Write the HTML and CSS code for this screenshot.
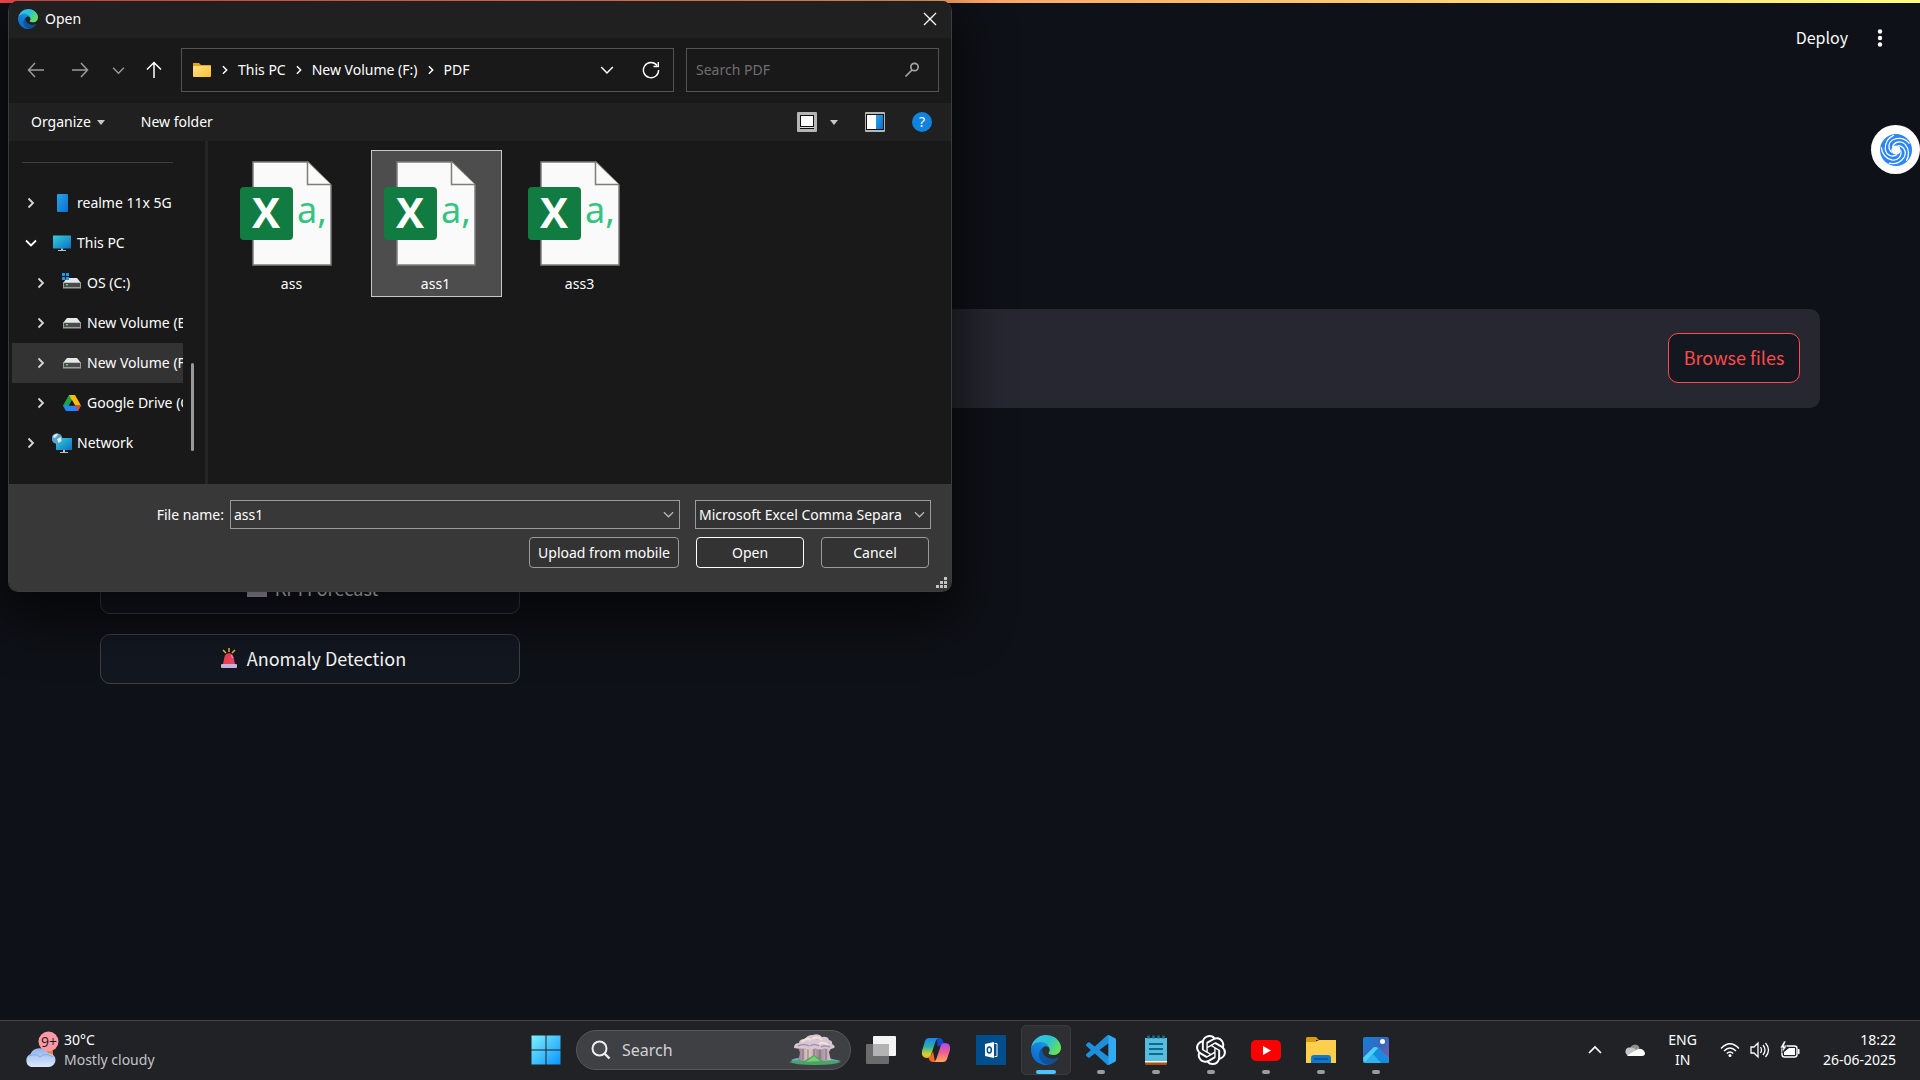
FILE: index.html
```html
<!DOCTYPE html>
<html lang="en">
<head>
<meta charset="utf-8">
<meta name="viewport" content="width=device-width, initial-scale=1">
<title>Open</title>
<link rel="stylesheet" href="styles.css">
</head>
<body>
<svg class="defs" aria-hidden="true">
  <defs>
    <linearGradient id="edgeNavy" x1="0" y1="0" x2="1" y2="0"><stop offset="0" stop-color="#0c59a4"/><stop offset="1" stop-color="#114a8b"/></linearGradient>
    <linearGradient id="edgeBlue" x1=".8" y1="0" x2=".3" y2="1"><stop offset="0" stop-color="#1b9de2"/><stop offset=".4" stop-color="#1481d8"/><stop offset="1" stop-color="#0a68c8"/></linearGradient>
    <linearGradient id="edgeGreen" x1="0" y1=".2" x2="1" y2=".7"><stop offset="0" stop-color="#35c1f1"/><stop offset=".5" stop-color="#2bc3d2"/><stop offset="1" stop-color="#6be54e"/></linearGradient>
    <linearGradient id="screen" x1="0" y1="0" x2="1" y2="1"><stop offset="0" stop-color="#33d0da"/><stop offset="1" stop-color="#0f6fc4"/></linearGradient>
    <linearGradient id="folder" x1="0" y1="0" x2="1" y2="1"><stop offset="0" stop-color="#ffe08a"/><stop offset="1" stop-color="#fcc22f"/></linearGradient>
    <linearGradient id="win" x1="0" y1="0" x2="1" y2="1"><stop offset="0" stop-color="#7df0ff"/><stop offset="1" stop-color="#0a94fb"/></linearGradient>
    <linearGradient id="cloud" x1="0" y1="0" x2="0" y2="1"><stop offset="0" stop-color="#8fb4ee"/><stop offset="1" stop-color="#dbe8fb"/></linearGradient>
    <linearGradient id="blueTile" x1="0" y1="0" x2="1" y2="1"><stop offset="0" stop-color="#29a4e8"/><stop offset="1" stop-color="#0a6fd0"/></linearGradient>
    <linearGradient id="copA" x1="0" y1="0" x2="0" y2="1"><stop offset="0" stop-color="#1686e8"/><stop offset=".45" stop-color="#2cb3a5"/><stop offset=".8" stop-color="#d5d02a"/><stop offset="1" stop-color="#f7b52a"/></linearGradient>
    <linearGradient id="copB" x1="0" y1="0" x2="0" y2="1"><stop offset="0" stop-color="#a44cf0"/><stop offset=".5" stop-color="#f25e90"/><stop offset="1" stop-color="#ffa95c"/></linearGradient>
    <linearGradient id="siren" x1="0" y1="0" x2="1" y2="0"><stop offset="0" stop-color="#f0413a"/><stop offset="1" stop-color="#e8467c"/></linearGradient>
    <linearGradient id="photo" x1="0" y1="0" x2="1" y2="1"><stop offset="0" stop-color="#1280d8"/><stop offset=".5" stop-color="#3668bd"/><stop offset="1" stop-color="#8a5aa8"/></linearGradient>
    <linearGradient id="trunk" x1="0" y1="0" x2="1" y2="0"><stop offset="0" stop-color="#8c7a90"/><stop offset=".3" stop-color="#e8cfc4"/><stop offset=".6" stop-color="#9c8896"/><stop offset="1" stop-color="#d8c4c8"/></linearGradient>
    <symbol id="edge" viewBox="0 0 256 256">
      <path fill="url(#edgeNavy)" d="M231 190.500a94 94 0 0 1-10.500 4.700 102 102 0 0 1-35.900 6.500c-47.300 0-88.500-32.500-88.500-74.300a31.500 31.500 0 0 1 16.400-27.300c-42.800 1.800-53.800 46.400-53.800 72.500 0 73.900 68.100 81.400 82.800 81.400 7.900 0 19.800-2.300 27-4.600l1.300-.4a128 128 0 0 0 66.600-52.800 4 4 0 0 0-5.400-5.700Z"/>
      <path fill="url(#edgeBlue)" d="M105.700 241.400a79 79 0 0 1-22.700-21.300 80.700 80.700 0 0 1 29.500-120c3.100-1.500 8.400-4.100 15.500-4a32.400 32.400 0 0 1 25.700 13 31.900 31.900 0 0 1 6.400 18.700c0-.2 24.400-79.600-80-79.600-43.900 0-80 41.600-80 78.200a130 130 0 0 0 12.100 56 128 128 0 0 0 156.300 67.100 75.500 75.500 0 0 1-62.800-8Z"/>
      <path fill="url(#edgeGreen)" d="M152.300 148.900c-.8 1-3.300 2.500-3.300 5.600 0 2.600 1.700 5.100 4.700 7.200 14.400 10 41.500 8.700 41.600 8.700a59.600 59.600 0 0 0 30.300-8.300A61.400 61.400 0 0 0 256 109.200c.3-22.400-8-37.300-11.300-43.900C223.500 23.800 177.700 0 128 0A128 128 0 0 0 0 126.200c.5-36.500 36.800-66 80-66 3.500 0 23.500.3 42 10 16.300 8.600 24.900 19 30.900 29.200 6.200 10.700 7.200 24.200 7.200 29.500 0 5.400-2.700 13.400-7.800 20Z"/>
    </symbol>
    <symbol id="chev" viewBox="0 0 12 12"><path d="M3.500 1.500 8 6l-4.500 4.500" fill="none" stroke="currentColor" stroke-width="1.800"/></symbol>
    <symbol id="down" viewBox="0 0 12 12"><path d="M1 3.500 6 8.500l5-5" fill="none" stroke="currentColor" stroke-width="1.300"/></symbol>
    <symbol id="drive" viewBox="0 0 20 20"><path d="M5 5h10l4 5H1z" fill="#e6e7e8"/><rect x="1" y="9.500" width="18" height="6" fill="#9a9c9e"/><rect x="2" y="10" width="16" height="4" fill="#484a4b"/><rect x="4" y="11" width="2" height="1.500" fill="#3fe055"/></symbol>
    <symbol id="pc" viewBox="0 0 20 20"><rect x="1" y="2.500" width="18" height="13" fill="url(#screen)"/><path d="M9 15.500h2v1.500h3v1H6v-1h3z" fill="#b8c4cc"/></symbol>
    <symbol id="csv" viewBox="0 0 106 106">
      <path d="M14 1h55l23 23v80H14z" fill="#fafafa" stroke="#7d7d7a" stroke-width="1.500"/>
      <path d="M68.500 1v22.500H92" fill="#fafafa" stroke="#7d7d7a" stroke-width="1.500"/>
      <rect x="1" y="26" width="53" height="53" rx="4" fill="#107c41"/>
      <text x="27" y="67" class="csv-x" text-anchor="middle">X</text>
      <text x="58" y="62" class="csv-a">a,</text>
    </symbol>
  </defs>
</svg>

<main class="app">
  <div class="strip"></div>
  <header class="app-header">
    <button class="deploy">Deploy</button>
    <button class="kebab" aria-label="Main menu"><svg width="20" height="20" viewBox="0 0 20 20" fill="#fafafa"><circle cx="10" cy="3.500" r="2.200"/><circle cx="10" cy="10" r="2.200"/><circle cx="10" cy="16.500" r="2.200"/></svg></button>
  </header>
  <div class="columns">
    <div class="menu">
      <button class="menu-btn"><svg width="20" height="20" viewBox="0 0 20 20"><rect x="0" y="1" width="20" height="18" fill="#cfc3dc"/><path d="M1 13l5-6 4 4 9-9" fill="none" stroke="#3b8ede" stroke-width="2"/></svg>KPI Forecast</button>
      <button class="menu-btn"><svg width="20" height="22" viewBox="0 0 20 22"><path d="M10 1v4M4 3l3 3M16 3l-3 3" stroke="#f3b93b" stroke-width="1.500"/><path d="M4 17l1.500-7a4.600 4.600 0 0 1 9 0L16 17z" fill="url(#siren)"/><path d="M12 8.500q1.500.5 1.500 2.500" stroke="#f9b8cf" fill="none"/><rect x="2" y="17" width="16" height="4" rx="1" fill="#c9b6e4"/></svg>Anomaly Detection</button>
    </div>
    <div class="uploader"><button class="browse">Browse files</button></div>
  </div>
  <button class="assistant" aria-label="Assistant">
    <svg width="34" height="34" viewBox="-17 -17 34 34">
      <circle r="16" fill="#2b85fb"/>
      <g fill="none" stroke="#fff" stroke-width="1.300">
        <path id="cut" d="M-4 2.500C-8.500-1-8-8-2.500-10.500 3-12.500 9-11.500 13.500-6.500"/>
        <use href="#cut" transform="rotate(72)"/><use href="#cut" transform="rotate(144)"/><use href="#cut" transform="rotate(216)"/><use href="#cut" transform="rotate(288)"/>
      </g>
      <circle r="4.600" fill="#fff"/>
    </svg>
  </button>
</main>

<section class="dialog" role="dialog" aria-label="Open">
  <header class="title">
    <svg width="20" height="20"><use href="#edge"/></svg>
    <h1>Open</h1>
    <button class="close" aria-label="Close"><svg width="14" height="14" viewBox="0 0 14 14"><path d="M1 1l12 12M13 1 1 13" stroke="#fff" stroke-width="1.300"/></svg></button>
  </header>
  <nav class="nav">
    <button class="dim" aria-label="Back"><svg width="18" height="18" viewBox="0 0 18 18"><path d="M8 2 1.500 9 8 16M2 9h15" fill="none" stroke="currentColor" stroke-width="1.500"/></svg></button>
    <button class="dim" aria-label="Forward"><svg width="18" height="18" viewBox="0 0 18 18"><path d="M10 2l6.500 7L10 16M16 9H1" fill="none" stroke="currentColor" stroke-width="1.500"/></svg></button>
    <button class="dim small" aria-label="Recent"><svg width="13" height="13"><use href="#down"/></svg></button>
    <button aria-label="Up"><svg width="18" height="18" viewBox="0 0 18 18"><path d="M2 8.500 9 1.500l7 7M9 2v15" fill="none" stroke="currentColor" stroke-width="1.500"/></svg></button>
    <div class="address">
      <svg width="20" height="20" viewBox="0 0 20 20"><path d="M1 3h6l2 2h10v4H1z" fill="#e8a317"/><rect x="1" y="6" width="18" height="11" rx="1" fill="url(#folder)"/></svg>
      <svg class="sep" width="10" height="10"><use href="#chev"/></svg><a href="#pc">This PC</a>
      <svg class="sep" width="10" height="10"><use href="#chev"/></svg><a href="#f">New Volume (F:)</a>
      <svg class="sep" width="10" height="10"><use href="#chev"/></svg><a href="#pdf">PDF</a>
      <button class="push" aria-label="Previous locations"><svg width="14" height="14"><use href="#down"/></svg></button>
      <button aria-label="Refresh"><svg width="18" height="18" viewBox="0 0 18 18"><path d="M15 4.500A7.600 7.600 0 1 0 16.600 9M16.300 1v4.500H11.500" fill="none" stroke="currentColor" stroke-width="1.400"/></svg></button>
    </div>
    <label class="find"><input type="search" placeholder="Search PDF" aria-label="Search PDF">
      <svg width="16" height="16" viewBox="0 0 16 16"><circle cx="10.500" cy="5" r="3.700" fill="none" stroke="#a5a5a5" stroke-width="1.700"/><path d="M8 8 1.500 14.500" stroke="#a5a5a5" stroke-width="1.700"/></svg></label>
  </nav>
  <div class="tools">
    <button>Organize <svg width="8" height="5" viewBox="0 0 8 5"><path d="M0 0h8L4 5z" fill="#c8c8c8"/></svg></button>
    <button>New folder</button>
    <div class="views">
      <button aria-label="View"><svg width="20" height="20" viewBox="0 0 20 20"><rect width="20" height="20" rx="1" fill="#b5b5b5"/><rect x="3" y="3" width="14" height="14" fill="#111"/><rect x="4" y="4" width="12" height="10" fill="#fff"/><rect x="3" y="15" width="14" height="1" fill="#ddd"/></svg></button>
      <button aria-label="More views"><svg width="8" height="5" viewBox="0 0 8 5"><path d="M0 0h8L4 5z" fill="#c8c8c8"/></svg></button>
      <button aria-label="Preview pane"><svg width="20" height="20" viewBox="0 0 20 20"><rect width="20" height="20" rx="1" fill="#b5b5b5"/><rect x="1" y="2" width="18" height="16" fill="#111"/><rect x="2" y="3" width="9" height="14" fill="#fff"/><rect x="11" y="3" width="7" height="14" fill="url(#blueTile)"/></svg></button>
      <button class="help" aria-label="Help">?</button>
    </div>
  </div>
  <div class="body">
    <div class="tree-pane">
      <div class="tree">
        <hr>
        <ul>
          <li><svg width="12" height="12"><use href="#chev"/></svg><svg width="20" height="20" viewBox="0 0 20 20"><rect x="5" y="1" width="11" height="18" rx="1" fill="url(#blueTile)"/></svg>realme 11x 5G</li>
          <li><svg width="12" height="12" viewBox="0 0 12 12"><path d="M1 3.500 6 8.500l5-5" fill="none" stroke="#fff" stroke-width="1.800"/></svg><svg width="20" height="20"><use href="#pc"/></svg>This PC</li>
          <li class="child"><svg width="12" height="12"><use href="#chev"/></svg><svg width="20" height="20" viewBox="0 0 20 20"><use href="#drive"/><path d="M0 0h3v3H0zM4 0h3v3H4zM0 4h3v3H0zM4 4h3v3H4z" fill="#1a9bf0"/></svg>OS (C:)</li>
          <li class="child"><svg width="12" height="12"><use href="#chev"/></svg><svg width="20" height="20"><use href="#drive"/></svg>New Volume (E:)</li>
          <li class="child current"><svg width="12" height="12"><use href="#chev"/></svg><svg width="20" height="20"><use href="#drive"/></svg>New Volume (F:)</li>
          <li class="child"><svg width="12" height="12"><use href="#chev"/></svg><svg width="20" height="20" viewBox="0 0 20 20"><path d="M7 2h6L4 17.500l-3-5z" fill="#1ea446"/><path d="M7 2h6l6 10.500h-6z" fill="#fbbc04"/><path d="M1 12.500h18L16 18H4z" fill="#2684fc"/><path d="M13 12.500h6L16 18z" fill="#ea4335"/><path d="M10 7.500l3 5H7z" fill="#191919"/></svg>Google Drive (G:)</li>
          <li><svg width="12" height="12"><use href="#chev"/></svg><svg width="20" height="20" viewBox="0 0 20 20"><rect x="4" y="5" width="16" height="12" fill="url(#screen)"/><path d="M11 17h2v2h3v1H8v-1h3z" fill="#b8c4cc"/><circle cx="5" cy="5.500" r="5.300" fill="#5ba3cb"/><path d="M1 3q3-3 5-2-2 4-4 4zM5 6l4-2 .500 4-3 2z" fill="#d9eef7"/></svg>Network</li>
        </ul>
      </div>
      <div class="thumb"></div>
    </div>
    <div class="files">
      <button class="file"><svg width="106" height="106"><use href="#csv"/></svg>ass</button>
      <button class="file selected"><svg width="106" height="106"><use href="#csv"/></svg>ass1</button>
      <button class="file"><svg width="106" height="106"><use href="#csv"/></svg>ass3</button>
    </div>
  </div>
  <footer class="foot">
    <div class="row">
      <label for="fname">File name:</label>
      <div class="combo"><input id="fname" type="text" value="ass1"><svg width="11" height="11"><use href="#down"/></svg></div>
      <div class="type"><select aria-label="File type"><option>Microsoft Excel Comma Separa</option></select><svg width="11" height="11"><use href="#down"/></svg></div>
    </div>
    <div class="row actions">
      <button class="wide">Upload from mobile</button>
      <button class="primary">Open</button>
      <button>Cancel</button>
    </div>
    <svg class="grip" width="12" height="12" viewBox="0 0 12 12" fill="#c4c4c4"><path d="M8 0h3v3H8zM4 4h3v3H4zM8 4h3v3H8zM0 8h3v3H0zM4 8h3v3H4zM8 8h3v3H8z"/></svg>
  </footer>
</section>

<footer class="taskbar">
  <button class="weather">
    <svg width="36" height="38" viewBox="0 0 36 38"><path d="M20 20h9v6h-9z" fill="#f47a1c"/><path d="M7 36a7 7 0 0 1-.5-13A10 10 0 0 1 24 22a7 7 0 0 1 1 14z" fill="url(#cloud)"/><path d="M5 25q7-3 11 1 5-5 13 0" fill="none" stroke="#86a9e6"/><circle cx="24.500" cy="10.500" r="10" fill="#ff99a4"/><text class="badge-text" x="25" y="16" text-anchor="middle">9+</text></svg>
    <span class="temp">30°C<small>Mostly cloudy</small></span>
  </button>
  <div class="apps">
    <button aria-label="Start"><svg width="30" height="30" viewBox="0 0 30 30"><path d="M.500.500h14v14h-14zM15.500.500h14v14h-14zM.500 15.500h14v14h-14zM15.500 15.500h14v14h-14z" fill="url(#win)"/></svg></button>
    <button class="search">
      <svg width="20" height="20" viewBox="0 0 20 20"><circle cx="8.500" cy="8.500" r="7" fill="#4a4b4e" stroke="#eee" stroke-width="2"/><path d="M13.500 13.500 18.500 18.500" stroke="#eee" stroke-width="2.400"/></svg>
      <span>Search</span>
      <svg width="54" height="32" viewBox="0 0 54 32"><path d="M3 26q6-3 13-2l20-1 17 4-12 2H8z" fill="#6fa8d0"/><path d="M10 13h34l-3 5 2 9H10l2-8z" fill="url(#trunk)"/><path d="M15 15v11M20 15v11M26 15v9M32 15v11M38 15v11" stroke="#7c6880"/><path d="M6 14q0-5 5-5 0-4 6-4 2-4 8-4 6-2 9 2 6-1 7 3 4 1 3 4 4 2 2 4-5 2-9 0-5 3-10 0-5 3-10 0-5 1-11 0z" fill="#d9c6d4"/><path d="M14 8q4-5 9-2M24 5q6-4 10 1M31 10q5-3 9 1" stroke="#f3e3cf" stroke-width="2" fill="none"/><path d="M10 12q6-3 11 0M22 12q4-3 9 0M33 13q4-2 9 0" stroke="#a58fb0" stroke-width="1.500" fill="none"/><path d="M1 28q8-3 15-1l10-6 9 6q10-2 18 1-6 3-26 3T1 28z" fill="#48a565"/><path d="M18 28l8-6 6 5z" fill="#7bcf6a"/></svg>
    </button>
    <button aria-label="Task view"><svg width="30" height="28" viewBox="0 0 30 28"><rect x="7" y="0" width="23" height="20" rx="1" fill="#f4f4f4"/><rect x="0" y="8" width="23" height="20" rx="1" fill="#6b6b6b"/><path d="M7 8h16v12H7z" fill="#b3b3b3"/></svg></button>
    <button aria-label="Copilot"><svg width="30" height="28" viewBox="0 0 30 28"><path d="M16 2h3q2 0 3 3l1.500 4-7 1z" fill="#1647d0"/><path d="M8 2h9.500Q15 3 14 7l-4 12q-1 3-4 3-6 0-5-7L4 5q1-3 4-3z" fill="url(#copA)"/><path d="M22 26h-9.500q2.500-1 3.500-5l4-12q1-2 4-2 6 0 5 7l-3 9q-1 3-4 3z" fill="url(#copB)"/><path d="M14 26h-3q-2 0-3-3l-.500-2Q11 20 12 15z" fill="#f1682a"/></svg></button>
    <button aria-label="Outlook"><svg width="30" height="30" viewBox="0 0 30 30"><rect width="30" height="30" fill="#004e8c"/><path d="M9 9l9-2v16l-9-2z" fill="#fff"/><path d="M18.500 8.500h2.500v13h-2.500" fill="none" stroke="#fff"/><ellipse cx="13.300" cy="15" rx="2" ry="3" fill="none" stroke="#004e8c" stroke-width="1.500"/></svg></button>
    <button class="active" aria-label="Edge"><svg width="30" height="30"><use href="#edge"/></svg></button>
    <button class="run" aria-label="Visual Studio Code"><svg width="30" height="30" viewBox="0 0 24 24"><path fill="#1d8fdb" d="M23.150 2.587 18.210.210a1.494 1.494 0 0 0-1.705.290l-9.460 8.630-4.120-3.128a.999.999 0 0 0-1.276.057L.327 7.261A1 1 0 0 0 .326 8.740L3.899 12 .326 15.260a1 1 0 0 0 .001 1.479L1.650 17.940a.999.999 0 0 0 1.276.057l4.120-3.128 9.460 8.630a1.492 1.492 0 0 0 1.704.290l4.942-2.377A1.500 1.500 0 0 0 24 20.060V3.939a1.500 1.500 0 0 0-.850-1.352zm-5.146 14.861L10.826 12l7.178-5.448z"/><path fill="#30abf2" d="M18 0l5.150 2.587A1.500 1.500 0 0 1 24 3.939V20.060a1.500 1.500 0 0 1-.850 1.350L18 23.900z"/></svg></button>
    <button class="run" aria-label="Notepad"><svg width="22" height="30" viewBox="0 0 22 30"><rect y="25" width="22" height="5" rx="1" fill="#a8500f"/><path d="M0 3h22v23H0z" fill="#58bcdd"/><path d="M0 26h22v1.500H0z" fill="#f3f3f3"/><path d="M4 9h14M4 14h14M4 19h14" stroke="#0b6a92" stroke-width="1.800"/><path d="M3.500.500v3M8.500.500v3M13.500.500v3M18.500.500v3" stroke="#0f7399" stroke-width="2.500"/></svg></button>
    <button class="run" aria-label="ChatGPT"><svg width="30" height="30" viewBox="0 0 24 24"><path fill="#fff" d="M22.282 9.821a5.985 5.985 0 0 0-.516-4.911 6.046 6.046 0 0 0-6.510-2.900A6.065 6.065 0 0 0 4.981 4.182a5.985 5.985 0 0 0-3.998 2.900 6.046 6.046 0 0 0 .743 7.097 5.980 5.980 0 0 0 .511 4.911 6.051 6.051 0 0 0 6.515 2.900A5.985 5.985 0 0 0 13.260 24a6.056 6.056 0 0 0 5.772-4.206 5.989 5.989 0 0 0 3.998-2.900 6.056 6.056 0 0 0-.748-7.073zm-9.022 12.608a4.475 4.475 0 0 1-2.876-1.041l.142-.080 4.778-2.758a.795.795 0 0 0 .393-.681v-6.737l2.020 1.169a.071.071 0 0 1 .038.052v5.583a4.504 4.504 0 0 1-4.495 4.493zm-9.661-4.125a4.471 4.471 0 0 1-.535-3.014l.142.085 4.783 2.758a.771.771 0 0 0 .781 0l5.843-3.369v2.332a.080.080 0 0 1-.033.062L9.740 19.950a4.499 4.499 0 0 1-6.141-1.646zM2.341 7.896a4.485 4.485 0 0 1 2.366-1.973V11.600a.766.766 0 0 0 .388.677l5.814 3.354-2.020 1.169a.076.076 0 0 1-.071 0l-4.830-2.787A4.504 4.504 0 0 1 2.341 7.872zm16.596 3.856L13.104 8.364 15.119 7.200a.076.076 0 0 1 .071 0l4.830 2.791a4.494 4.494 0 0 1-.677 8.104v-5.677a.790.790 0 0 0-.406-.666zm2.011-3.023-.142-.085-4.774-2.782a.776.776 0 0 0-.785 0L9.409 9.230V6.897a.066.066 0 0 1 .028-.061l4.830-2.787a4.499 4.499 0 0 1 6.681 4.680zM8.307 12.863l-2.020-1.164a.080.080 0 0 1-.038-.057V6.074a4.499 4.499 0 0 1 7.376-3.454l-.142.081L8.704 5.459a.795.795 0 0 0-.393.681zm1.097-2.365 2.602-1.500 2.607 1.500v2.999l-2.597 1.500-2.607-1.500z"/></svg></button>
    <button class="run" aria-label="YouTube"><svg width="30" height="30" viewBox="0 0 30 30"><rect y="5" width="30" height="21" rx="5" fill="#f00"/><path d="M12 11v9l8-4.500z" fill="#fff"/></svg></button>
    <button class="run" aria-label="File Explorer"><svg width="30" height="28" viewBox="0 0 30 28"><path d="M1 1h9l3 3h-3v5H0V2z" fill="#dd9a0b"/><path d="M0 6h9l4-2h17v23H0z" fill="#fdcf4d"/><path d="M5 27v-5q0-3 3-3h14q3 0 3 3v5z" fill="#0f79cf"/><path d="M8 23h14" stroke="#0a4f93" stroke-width="1.500"/></svg></button>
    <button class="run" aria-label="Photos"><svg width="26" height="26" viewBox="0 0 26 26"><rect width="26" height="26" rx="2" fill="url(#photo)"/><path d="M0 21 10 11q2-2 5 0l11 11v2q0 2-2 2H2q-2 0-2-2z" fill="#2fb4ee"/><path d="M15 11l11 11v2q0 2-2 2h-6l-8-9z" fill="#168ce0"/><path d="M0 21 10 11q2-2 5 0L2 25z" fill="#4cd0f7"/><circle cx="19.500" cy="4.500" r="2.500" fill="#fff"/></svg></button>
  </div>
  <div class="tray">
    <button aria-label="Hidden icons"><svg width="14" height="14" viewBox="0 0 14 14"><path d="M1 10l6-6 6 6" fill="none" stroke="#fff" stroke-width="1.700"/></svg></button>
    <button aria-label="OneDrive"><svg width="20" height="14" viewBox="0 0 20 14"><path d="M5 6a5 5 0 0 1 9.500-1.500L12 9 4 8z" fill="#8f8f8f"/><path d="M4 12.500A4 4 0 0 1 5 4.500q3-.5 6 2l-5 6z" fill="#c4c4c4"/><path d="M2 12.500 13 6q5-1 7 4 0 3-3 3H4q-1.500 0-2-.500z" fill="#fff"/></svg></button>
    <button class="lang">ENG<br>IN</button>
    <button class="status" aria-label="Network, volume, battery">
      <svg width="20" height="16" viewBox="0 0 20 16" fill="none" stroke="#fff" stroke-width="1.400"><path d="M1 6.500q9-9.500 18 0M4 9q6-6 12 0M6.800 11.500q3.200-3 6.400 0"/><circle cx="10" cy="13.500" r="1.500" fill="#fff" stroke="none"/></svg>
      <svg width="20" height="18" viewBox="0 0 20 18" fill="none" stroke="#fff" stroke-width="1.300"><path d="M1 6h3l4-4v14l-4-4H1zM10.500 6q2 3 0 6M13 4q4 5 0 10M15.500 2q6 7 0 14"/></svg>
      <svg width="20" height="18" viewBox="0 0 20 18"><rect x="2" y="5" width="15" height="11" rx="2.500" fill="none" stroke="#fff" stroke-width="1.400"/><path d="M4 11l5-4h6v7H4zM18 8h1.500v5H18z" fill="#fff"/><path d="M4 0 0 7h3l-1 5 5-7H4l2-5z" fill="#fff" stroke="#202226" stroke-width=".6"/></svg>
    </button>
    <button class="clock">18:22<br>26-06-2025</button>
  </div>
</footer>
</body>
</html>
```
FILE: styles.css
```css
* { box-sizing: border-box; }

body {
  margin: 0;
  min-height: 100vh;
  display: flex;
  flex-direction: column;
  position: relative;
  overflow-x: hidden;
  background: #0e1117;
  color: #fff;
  font: 14px/20px "Noto Sans", "Open Sans", sans-serif;
}

button, input, select { font: inherit; color: inherit; }

button {
  display: flex;
  align-items: center;
  justify-content: center;
  padding: 0;
  border: 0;
  background: none;
}

svg { display: block; flex: none; }
.defs { position: absolute; width: 0; height: 0; }

/* Web app */
.app {
  flex: 1;
  position: relative;
  font-family: "Noto Sans CJK SC", sans-serif;
  color: #fafafa;
}

.strip { height: 3px; background: linear-gradient(90deg, #ff4b4b, #fffd80); }

.app-header {
  display: flex;
  justify-content: flex-end;
  align-items: center;
  gap: 22px;
  height: 70px;
  padding-right: 30px;
}

.deploy { padding-bottom: 2px; font-size: 16px; }
.kebab { width: 20px; }

.columns {
  display: grid;
  grid-template-columns: 1fr 3fr;
  align-items: start;
  gap: 40px;
  padding: 236px 100px 0;
}

.menu {
  display: flex;
  flex-direction: column;
  gap: 20px;
  padding-top: 255px;
}

.menu-btn {
  height: 50px;
  gap: 8px;
  padding: 0 0 2px 5px;
  border: 1px solid #3e4046;
  border-radius: 10px;
  background: #131720;
  font-size: 18px;
}

.uploader {
  display: flex;
  justify-content: flex-end;
  padding: 24px 20px 25px;
  border-radius: 10px;
  background: #262730;
}

.browse {
  width: 132px;
  height: 50px;
  padding-bottom: 2px;
  border: 1px solid #ff4b4b;
  border-radius: 10px;
  background: #131720;
  color: #ff4b4b;
  font-size: 18px;
}

.assistant {
  position: absolute;
  top: 125px;
  right: 0;
  width: 49px;
  height: 49px;
  border-radius: 50%;
  background: #fff;
}

/* File picker window */
.dialog {
  position: absolute;
  top: 1px;
  left: 8px;
  width: 944px;
  display: flex;
  flex-direction: column;
  border: 1px solid #3c3c3c;
  border-top: 0;
  border-radius: 10px;
  background: #191919;
  box-shadow: 0 20px 50px 10px rgba(0, 0, 0, .6);
  overflow: hidden;
}

.title {
  display: flex;
  align-items: center;
  gap: 7px;
  height: 37px;
  padding: 0 14px 1px 9px;
  background: #202020;
}

.title h1 { margin: 0; font-size: 14px; font-weight: 400; }
.close { margin-left: auto; }

.nav {
  display: flex;
  align-items: center;
  height: 65px;
  padding: 0 12px 1px 18px;
  gap: 26px;
}

.nav > button { width: 18px; }
.nav > .small { width: 14px; margin-left: -4px; }
.nav > .small + button { margin-left: -6px; }
.dim { color: #9b9b9b; }

.address {
  flex: 1;
  display: flex;
  align-items: center;
  gap: 8px;
  height: 44px;
  margin-left: -8px;
  padding: 0 13px 0 10px;
  border: 1px solid #535353;
}

.address a { color: #fff; text-decoration: none; }
.address .push { margin: 0 20px 0 auto; }

.find {
  display: flex;
  align-items: center;
  width: 253px;
  height: 44px;
  margin-left: -14px;
  padding: 0 18px 0 9px;
  border: 1px solid #535353;
}

.find input {
  flex: 1;
  min-width: 0;
  padding: 0;
  border: 0;
  background: none;
}

.find input::placeholder { color: #6f6f6f; }

.tools {
  display: flex;
  align-items: center;
  gap: 36px;
  height: 38px;
  padding: 0 19px 0 22px;
  background: #202020;
}

.tools button { gap: 6px; }
.views { display: flex; align-items: center; margin-left: auto; gap: 27px; }
.views button:nth-child(2) { margin-left: -14px; }

.help {
  width: 20px;
  height: 20px;
  border-radius: 50%;
  background: #0f83dd;
}

.body { display: flex; height: 343px; }

.tree-pane {
  display: flex;
  width: 199px;
  border-right: 3px solid #262626;
}

.tree { width: 174px; overflow: hidden; padding-left: 3px; }
.tree hr { width: 151px; height: 1px; margin: 21px 10px 20px; border: 0; background: #3d3d3d; }
.tree ul { margin: 0; padding: 0; list-style: none; }

.tree li {
  display: flex;
  align-items: center;
  height: 40px;
  padding-left: 13px;
  white-space: nowrap;
}

.tree li svg { color: #d8d8d8; }
.tree li svg + svg { margin: 0 5px 0 15px; }
.tree .child { padding-left: 23px; }
.tree .current { background: #333; }

.thumb {
  width: 3px;
  height: 88px;
  margin: 222px 0 0 8px;
  border-radius: 2px;
  background: #9a9a9a;
}

.files { display: flex; align-items: flex-start; gap: 13px; padding: 9px 19px; }

.file {
  flex-direction: column;
  width: 131px;
  height: 147px;
  gap: 7px;
  padding: 7px 2px 0 0;
  border: 1px solid transparent;
}

.selected { border-color: #c8c8c8; background: #4d4d4d; }
.csv-x { font: 700 42px "Open Sans", sans-serif; fill: #fff; }
.csv-a { font: 36px "Noto Sans", sans-serif; fill: #33c481; }

.foot {
  position: relative;
  display: flex;
  flex-direction: column;
  gap: 8px;
  padding: 16px 20px 23px;
  background: #383838;
}

.row { display: flex; justify-content: flex-end; align-items: center; gap: 15px; }
.row label { margin-right: -9px; }

.combo, .type {
  position: relative;
  display: flex;
  align-items: center;
  width: 450px;
  height: 29px;
  border: 1px solid #9b9b9b;
}

.type { width: 236px; background: #333; }
.combo svg, .type svg { position: absolute; right: 5px; color: #bbb; }

.combo input, .type select {
  width: 100%;
  padding: 0 26px 0 3px;
  border: 0;
  background: none;
  appearance: none;
}

.type select { padding-right: 0; }

.actions { gap: 17px; padding-right: 2px; }

.actions button {
  width: 108px;
  height: 31px;
  border: 1px solid #9b9b9b;
  border-radius: 4px;
  background: #333;
}

.actions .wide { width: 150px; }
.actions .primary { border-color: #fff; }
.grip { position: absolute; right: 3px; bottom: 2px; }

/* Taskbar */
.taskbar {
  display: grid;
  grid-template-columns: 1fr auto 1fr;
  align-items: center;
  height: 60px;
  padding-bottom: 2px;
  border-top: 1px solid #45474a;
  background: #202226;
}

.weather { justify-content: flex-start; gap: 4px; padding-left: 24px; text-align: left; }
.temp small { display: block; font-size: 14px; color: #c3c4c6; }
.badge-text { font: 14px "Open Sans", sans-serif; fill: #1a1a1a; }

.apps { display: flex; align-items: center; gap: 5px; padding-left: 2px; }

.apps button {
  position: relative;
  width: 50px;
  height: 50px;
  border-radius: 5px;
}

.apps .search {
  width: 275px;
  height: 40px;
  gap: 11px;
  padding: 0 8px 0 14px;
  border: 1px solid #55575b;
  border-radius: 20px;
  background: #3f4043;
  color: #d2d3d5;
  font-size: 16px;
}

.search span { flex: 1; text-align: left; }
.apps .active { border: 1px solid #3a3c40; background: #2d2f33; }

.run::after, .active::after {
  content: "";
  position: absolute;
  bottom: 1px;
  left: 50%;
  width: 8px;
  height: 4px;
  margin-left: -4px;
  border-radius: 2px;
  background: #9a9b9d;
}

.apps .active::after { bottom: 0; width: 20px; margin-left: -10px; background: #4cc2ff; }

.tray { display: flex; justify-content: flex-end; align-items: center; gap: 23px; padding-right: 24px; }
.status { gap: 10px; }
.clock { display: block; text-align: right; }
.lang { display: block; text-align: center; }
```
